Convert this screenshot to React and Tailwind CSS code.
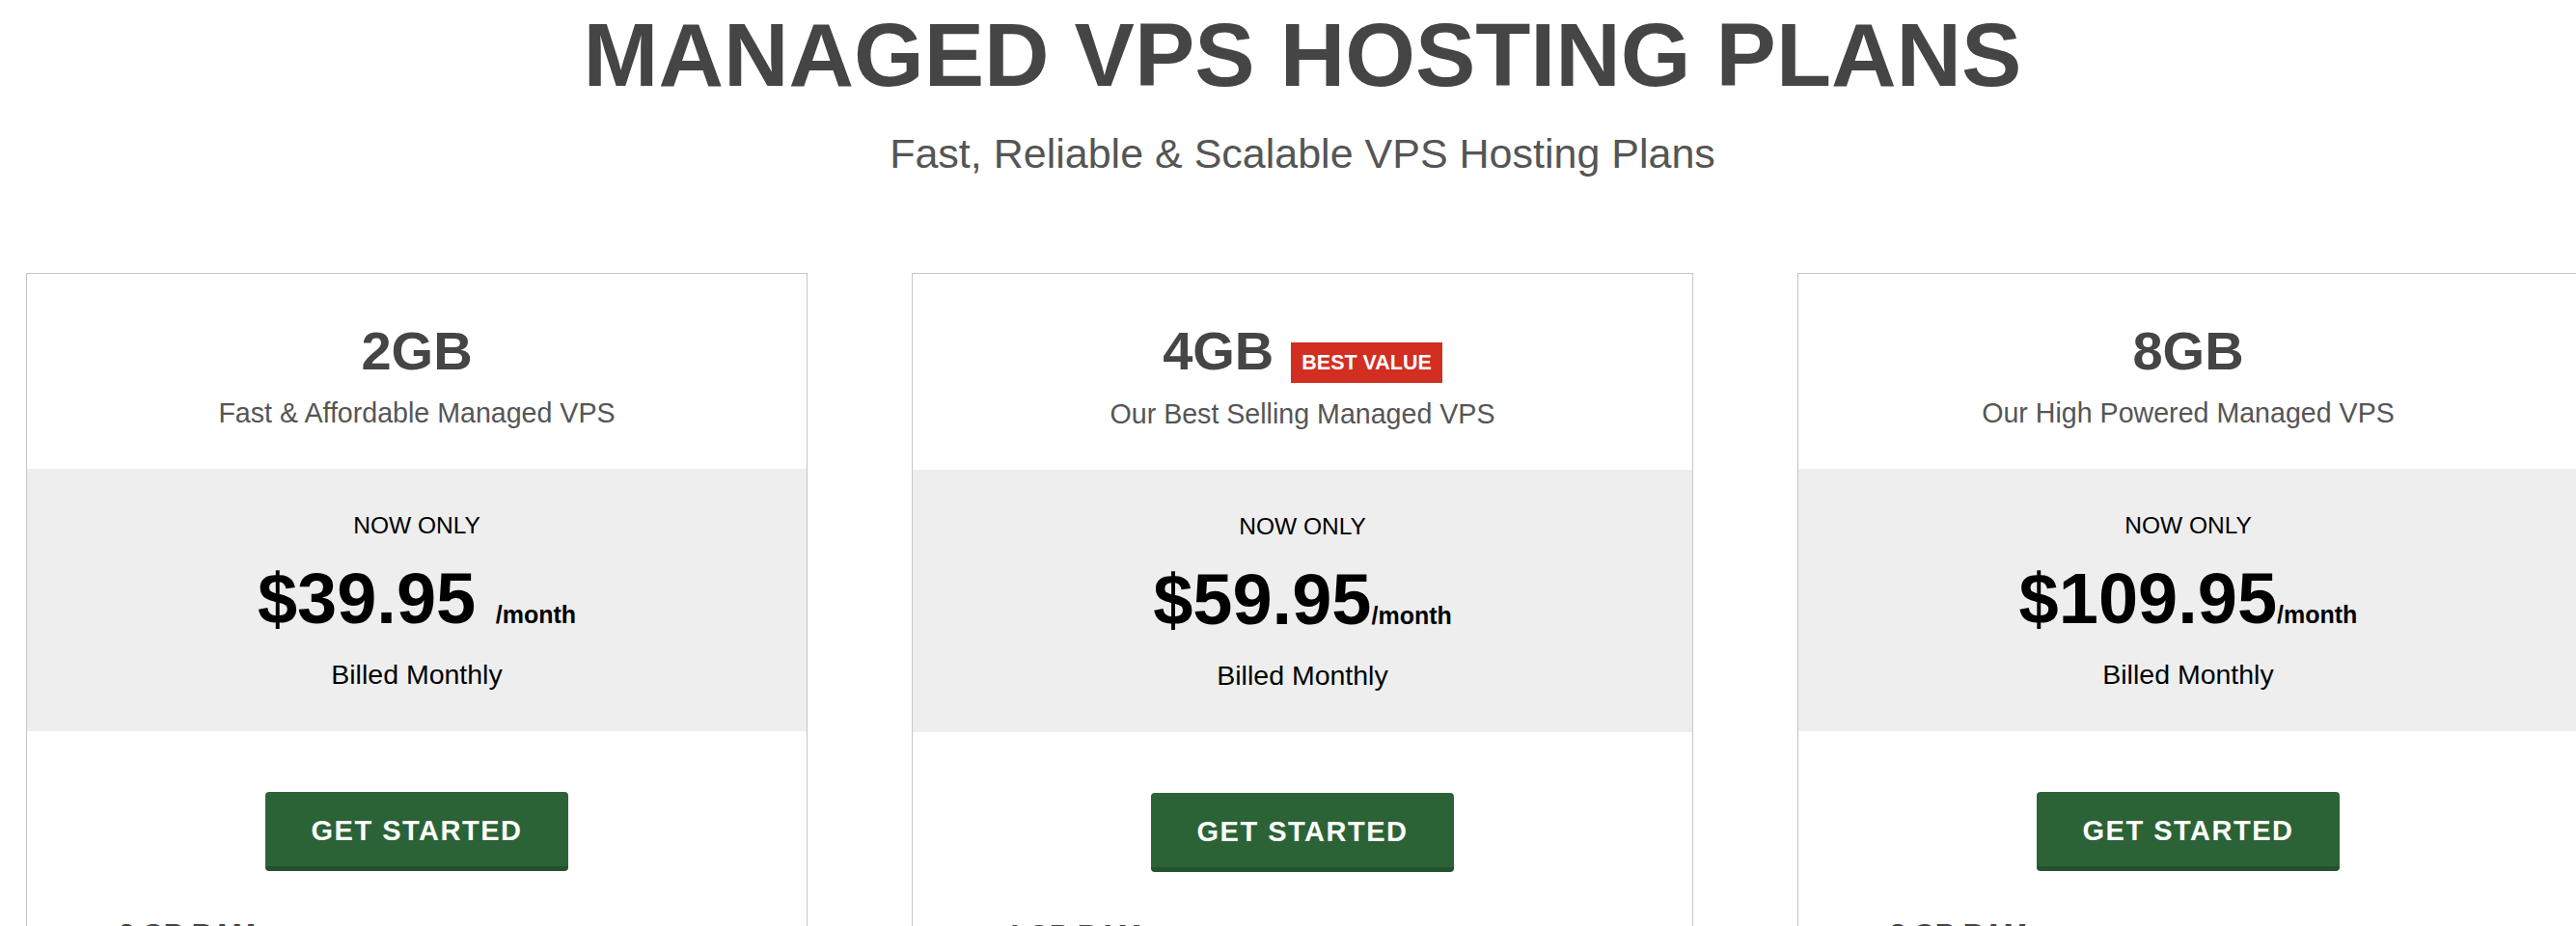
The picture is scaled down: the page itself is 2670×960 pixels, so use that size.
const plans = [
  {
    name: "2GB",
    tagline: "Fast & Affordable Managed VPS",
    price: "$39.95",
    spaced: true,
    feature: "2 GB RAM",
  },
  {
    name: "4GB",
    tagline: "Our Best Selling Managed VPS",
    price: "$59.95",
    badge: "BEST VALUE",
    feature: "4 GB RAM",
  },
  {
    name: "8GB",
    tagline: "Our High Powered Managed VPS",
    price: "$109.95",
    feature: "8 GB RAM",
  },
];

function PlanCard({ plan }) {
  return (
    <div className="w-[810px] shrink-0 border border-[#c6c6c6] bg-white">
      <div className="pt-[48px] pb-[41px] text-center">
        <div className="flex items-baseline justify-center gap-[18px]">
          <h3 className="text-[56px] leading-[64px] font-bold text-[#454545]">{plan.name}</h3>
          {plan.badge && (
            <span className="h-[42px] px-[11px] bg-[#d22e21] text-white text-[21.5px] leading-[42px] font-bold">
              {plan.badge}
            </span>
          )}
        </div>
        <p className="mt-[16px] text-[28.6px] leading-[33px] text-[#555]">{plan.tagline}</p>
      </div>

      <div className="bg-[#eeeeee] pt-[45px] pb-[42px] text-center text-black">
        <p className="text-[24.5px] leading-[28px]">NOW ONLY</p>
        <div className="mt-[20px] flex items-baseline justify-center">
          <span className="text-[74px] leading-[84px] font-bold whitespace-pre">
            {plan.spaced ? plan.price + " " : plan.price}
          </span>
          <span className="text-[25px] leading-[28px] font-bold">/month</span>
        </div>
        <p className="mt-[20px] text-[28.5px] leading-[33px]">Billed Monthly</p>
      </div>

      <div className="pt-[63px] flex justify-center">
        <button className="w-[314px] h-[82px] rounded-[4px] bg-[#2b6337] border-b-[5px] border-[#22522c] pt-[3px] text-white text-[29px] leading-[74px] font-bold tracking-[1.5px]">
          GET STARTED
        </button>
      </div>

      {/* feature list starts right at the fold */}
      <ul className="mt-[49px] pl-[95px] pb-[40px]">
        <li className="text-[29px] leading-[33px] font-bold text-[#454545]">{plan.feature}</li>
      </ul>
    </div>
  );
}

export default function App() {
  return (
    <div className="w-full h-[960px] overflow-hidden bg-white" style={{ fontFamily: '"Liberation Sans", Arial, sans-serif' }}>
      <div className="w-[2700px] px-[27px]">
        <h1 className="pt-[3px] text-center text-[93.5px] leading-[108px] font-bold text-[#454545]">
          MANAGED VPS HOSTING PLANS
        </h1>
        <p className="mt-[23px] text-center text-[43px] leading-[50px] text-[#555]">
          Fast, Reliable &amp; Scalable VPS Hosting Plans
        </p>

        <div className="mt-[99px] flex gap-[108px]">
          {plans.map((plan) => (
            <PlanCard key={plan.name} plan={plan} />
          ))}
        </div>
      </div>
    </div>
  );
}
